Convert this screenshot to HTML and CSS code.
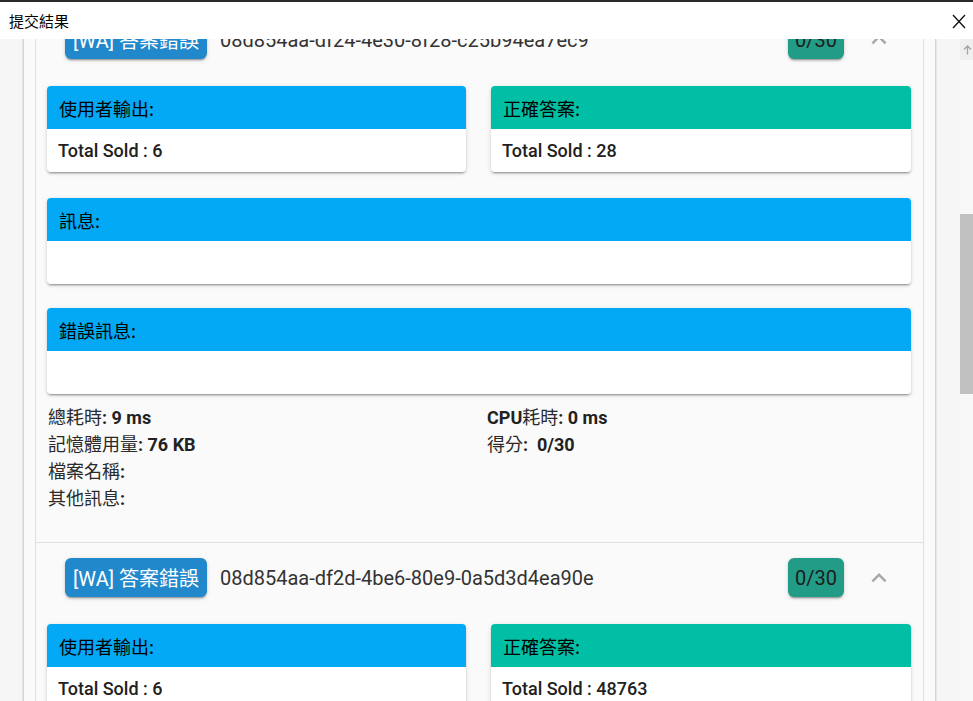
FILE: index.html
```html
<!DOCTYPE html>
<html lang="zh-Hant">
<head>
<meta charset="utf-8">
<title>提交結果</title>
<link rel="stylesheet" href="styles.css">
</head>
<body>
<div class="dialog">
  <header class="titlebar">
    <span class="title">提交結果</span>
    <span class="close" aria-label="close">
      <svg width="14" height="15" viewBox="0 0 14 15"><path d="M1 1 L13 14 M13 1 L1 14" stroke="#111" stroke-width="1.3" fill="none"/></svg>
    </span>
  </header>
  <div class="main">
    <div class="viewport">
      <div class="sheet">
        <section class="panel first">
          <div class="panel-head">
            <span class="verdict">[WA] 答案錯誤</span>
            <span class="guid">08d854aa-df24-4e30-8f28-c25b94ea7ec9</span>
            <span class="score">0/30</span>
            <svg class="chev" width="30" height="30" viewBox="0 0 24 24"><path d="M7.41,15.41L12,10.83L16.59,15.41L18,14L12,8L6,14L7.41,15.41Z"/></svg>
          </div>
          <div class="panel-body">
            <div class="pair">
              <div class="card"><div class="card-head blue">使用者輸出:</div><div class="card-body">Total Sold : 6</div></div>
              <div class="card"><div class="card-head teal">正確答案:</div><div class="card-body">Total Sold : 28</div></div>
            </div>
            <div class="card msg"><div class="card-head blue">訊息:</div><div class="card-body"></div></div>
            <div class="card err"><div class="card-head blue">錯誤訊息:</div><div class="card-body"></div></div>
            <div class="info">
              <div class="line"><span class="zh">總耗時</span>: 9 ms</div>
              <div class="line">CPU<span class="zh">耗時</span>: 0 ms</div>
              <div class="line"><span class="zh">記憶體用量</span>: 76 KB</div>
              <div class="line"><span class="zh">得分</span>:&nbsp; 0/30</div>
              <div class="line"><span class="zh">檔案名稱</span>:</div>
              <div class="line"></div>
              <div class="line"><span class="zh">其他訊息</span>:</div>
              <div class="line"></div>
            </div>
          </div>
        </section>
        <section class="panel">
          <div class="panel-head">
            <span class="verdict">[WA] 答案錯誤</span>
            <span class="guid">08d854aa-df2d-4be6-80e9-0a5d3d4ea90e</span>
            <span class="score">0/30</span>
            <svg class="chev" width="30" height="30" viewBox="0 0 24 24"><path d="M7.41,15.41L12,10.83L16.59,15.41L18,14L12,8L6,14L7.41,15.41Z"/></svg>
          </div>
          <div class="panel-body">
            <div class="pair">
              <div class="card"><div class="card-head blue">使用者輸出:</div><div class="card-body">Total Sold : 6</div></div>
              <div class="card"><div class="card-head teal">正確答案:</div><div class="card-body">Total Sold : 48763</div></div>
            </div>
            <div class="card msg"><div class="card-head blue">訊息:</div><div class="card-body"></div></div>
            <div class="card err"><div class="card-head blue">錯誤訊息:</div><div class="card-body"></div></div>
          </div>
        </section>
      </div>
    </div>
    <div class="scrollbar">
      <div class="sb-btn">
        <svg width="9" height="10" viewBox="0 0 9 10"><path d="M4.5 1 V9.5 M1 4.5 L4.5 1 L8 4.5" stroke="#a3a3a3" stroke-width="1.3" fill="none"/></svg>
      </div>
      <div class="sb-track"><div class="sb-thumb"></div></div>
    </div>
  </div>
</div>
</body>
</html>
```

FILE: styles.css
```css
* { box-sizing: border-box; }

html, body {
  margin: 0;
  padding: 0;
  width: 973px;
  height: 701px;
  overflow: hidden;
  background: #fafafa;
  font-family: Roboto, "Noto Sans CJK TC", sans-serif;
}

.dialog {
  display: flex;
  flex-direction: column;
  width: 973px;
  height: 701px;
}

.titlebar {
  flex: 0 0 39px;
  display: flex;
  align-items: center;
  justify-content: space-between;
  border-top: 2px solid #2a2a2a;
  background: #ffffff;
  padding: 0 7px 0 9px;
}

.title {
  font-size: 15px;
  color: #000;
  font-family: "Noto Sans CJK TC", sans-serif;
}

.close {
  display: flex;
  align-items: center;
  padding-top: 1px;
}

.main {
  flex: 1;
  display: flex;
  min-height: 0;
}

.viewport {
  flex: 1;
  overflow: hidden;
  background: #f6f6f6;
  padding-left: 24px;
}

.sheet {
  width: 911px;
  margin-top: -35px;
  padding: 0 11px;
  background: #fafafa;
  box-shadow: 0 0 3px rgba(0, 0, 0, 0.28), 0 2px 2px rgba(0, 0, 0, 0.1);
  min-height: 1400px;
}

.panel {
  border: 1px solid #e0e0e0;
  border-bottom: none;
  background: #fafafa;
}

.panel-head {
  display: flex;
  align-items: center;
  padding: 15px 29px 15px 29px;
}

.verdict {
  height: 39px;
  display: flex;
  align-items: center;
  padding: 0 8px;
  border-radius: 6px;
  background: #2189cb;
  color: #fff;
  font-size: 20px;
  box-shadow: 0 3px 1px -2px rgba(0, 0, 0, 0.2), 0 2px 2px 0 rgba(0, 0, 0, 0.14), 0 1px 5px 0 rgba(0, 0, 0, 0.12);
  white-space: nowrap;
}

.guid {
  margin-left: 13px;
  font-size: 20px;
  color: #333;
  flex: 1;
  white-space: nowrap;
}

.score {
  height: 39px;
  width: 56px;
  display: flex;
  align-items: center;
  justify-content: center;
  border-radius: 6px;
  background: #229c86;
  color: #1c1c1c;
  font-size: 20px;
  box-shadow: 0 3px 1px -2px rgba(0, 0, 0, 0.2), 0 2px 2px 0 rgba(0, 0, 0, 0.14), 0 1px 5px 0 rgba(0, 0, 0, 0.12);
}

.chev {
  margin-left: 20px;
  fill: #a8a8a8;
}

.panel-body {
  padding: 12px 12px 30px 11px;
}

.pair {
  display: grid;
  grid-template-columns: 419px 420px;
  column-gap: 25px;
  margin-bottom: 26px;
}

.card {
  background: #fff;
  border-radius: 4px;
  overflow: hidden;
  box-shadow: 0 3px 1px -2px rgba(0, 0, 0, 0.2), 0 2px 2px 0 rgba(0, 0, 0, 0.14), 0 1px 5px 0 rgba(0, 0, 0, 0.12);
}

.card.msg { margin-bottom: 24px; }
.card.err { margin-bottom: 10px; }

.card-head {
  height: 43px;
  display: flex;
  align-items: center;
  padding-left: 12px;
  font-size: 18px;
  color: #000;
  font-family: "Noto Sans CJK TC", sans-serif;
}

.card-head.blue { background: #03a9f4; }
.card-head.teal { background: #00bfa5; }

.card-body {
  height: 43px;
  display: flex;
  align-items: center;
  padding-left: 11px;
  font-size: 18px;
  font-weight: 500;
  color: #212121;
}

.info {
  display: grid;
  grid-template-columns: 439px 1fr;
  padding-left: 1px;
}

.line {
  height: 27px;
  line-height: 27px;
  font-size: 18px;
  font-weight: 700;
  color: #222;
  white-space: pre;
}

.line .zh {
  font-weight: 400;
  color: #2a2a2a;
}

.scrollbar {
  flex: 0 0 13px;
  display: flex;
  flex-direction: column;
  background: #f8f8f8;
}

.sb-btn {
  height: 21px;
  background: #efefef;
  display: flex;
  align-items: center;
  justify-content: center;
  padding-left: 2px;
}

.sb-track {
  flex: 1;
  padding-top: 154px;
}

.sb-thumb {
  height: 180px;
  background: #c1c1c1;
}
```
